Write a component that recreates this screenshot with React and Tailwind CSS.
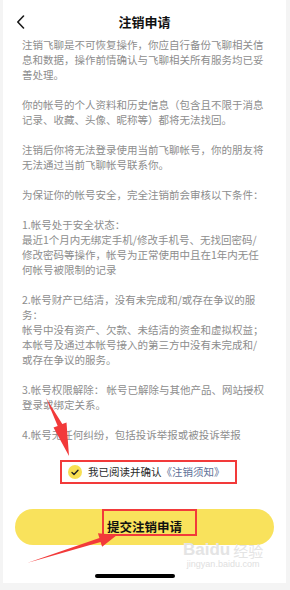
import React from "react";

const paragraphs = [
  ["注销飞聊是不可恢复操作，你应自行备份飞聊相关信", "息和数据，操作前情确认与飞聊相关所有服务均已妥", "善处理。"],
  ["你的帐号的个人资料和历史信息（包含且不限于消息", "记录、收藏、头像、昵称等）都将无法找回。"],
  ["注销后你将无法登录使用当前飞聊帐号，你的朋友将", "无法通过当前飞聊帐号联系你。"],
  ["为保证你的帐号安全，完全注销前会审核以下条件："],
  ["1.帐号处于安全状态：", "最近1个月内无绑定手机/修改手机号、无找回密码/", "修改密码等操作，帐号为正常使用中且在1年内无任", "何帐号被限制的记录"],
  ["2.帐号财产已结清，没有未完成和/或存在争议的服", "务：", "帐号中没有资产、欠款、未结清的资金和虚拟权益；", "本帐号及通过本帐号接入的第三方中没有未完成和/", "或存在争议的服务。"],
  ["3.帐号权限解除： 帐号已解除与其他产品、网站授权", "登录或绑定关系。"],
  ["4.帐号无任何纠纷，包括投诉举报或被投诉举报"],
];

const font = { fontFamily: '"Noto Sans CJK SC", "Noto Sans", sans-serif' };

export default function App() {
  return (
    <div className="relative w-[290px] h-[590px] bg-[#f4f4f4] overflow-hidden" style={font}>
      <div className="relative ml-[3px] w-[283px] h-[583px] bg-white flex flex-col">
        {/* header */}
        <div className="relative h-[37px] pt-[6px] flex items-center justify-center">
          <svg className="absolute left-[13px] top-[15px]" width="10" height="14" viewBox="0 0 10 14">
            <path d="M7.5 1 L1.8 7 L7.5 13" fill="none" stroke="#1a1a1a" strokeWidth="1.6" strokeLinecap="round" strokeLinejoin="round" />
          </svg>
          <span className="text-[13px] font-semibold text-[#111] leading-none">注销申请</span>
        </div>

        {/* body */}
        <div className="pl-[19px] flex flex-col gap-[15px] text-[10.5px] leading-[15px] text-[#8d8d8d]">
          {paragraphs.map((p, i) => (
            <div key={i}>
              {p.map((line, j) => (
                <div key={j} className="whitespace-nowrap">{line}</div>
              ))}
            </div>
          ))}
        </div>

        {/* agreement */}
        <div className="mt-[18px] ml-[57px] w-[177px] h-[24px] border-2 border-[#f23a3a] flex items-center pl-[6px] gap-[6px]">
          <div className="w-[14px] h-[14px] rounded-full bg-[#f8df52] flex items-center justify-center">
            <svg width="8" height="7" viewBox="0 0 8 7">
              <path d="M1 3.6 L3 5.5 L7 1.3" fill="none" stroke="#222" strokeWidth="1.4" strokeLinecap="round" strokeLinejoin="round" />
            </svg>
          </div>
          <span className="text-[10.5px] leading-none whitespace-nowrap">
            <span className="text-[#2a2a2a]">我已阅读并确认</span>
            <span className="text-[#5d7097]">《注销须知》</span>
          </span>
        </div>

        {/* button */}
        <div className="relative mt-[25px] ml-[12px] w-[259px] h-[36px] rounded-full bg-[#f9e25c] flex items-center justify-center">
          <span className="text-[12.5px] font-bold text-[#111] leading-none pt-[1px]">提交注销申请</span>
          <div className="absolute left-[87px] top-0 w-[95px] h-[27px] border-2 border-[#f23a3a]" />
        </div>

        {/* home indicator */}
        <div className="mt-[29px] ml-[92px] w-[80px] h-[4px] rounded-full bg-black" />
      </div>

      {/* watermark */}
      <div className="absolute left-[183px] top-[541px] flex flex-col items-center pointer-events-none select-none">
        <div className="flex items-end leading-none">
          <span className="text-[17px] font-bold text-[#e4e4e4]" style={{ fontFamily: '"Liberation Sans", sans-serif' }}>Bai</span>
          <span className="text-[17px] font-bold text-[#e4e4e4]" style={{ fontFamily: '"Liberation Sans", sans-serif' }}>du</span>
          <span className="ml-[3px] text-[15px] text-[#e4e4e4]">经验</span>
        </div>
        <span className="text-[9px] leading-[12px] text-[#e0e0e0]" style={{ fontFamily: '"Liberation Sans", sans-serif' }}>jingyan.baidu.com</span>
      </div>

      {/* annotation arrows */}
      <svg className="absolute left-0 top-0 pointer-events-none" width="290" height="590" viewBox="0 0 290 590">
        <polygon points="46,398 57.7,425.9 53.5,427.6 69,456 66.5,422.4 62.3,424.1" fill="#f23a3a" />
        <polygon points="27,563 99.4,538.1 97.9,533.3 117,535 102.1,546.7 100.6,541.9" fill="#f23a3a" />
      </svg>
    </div>
  );
}
